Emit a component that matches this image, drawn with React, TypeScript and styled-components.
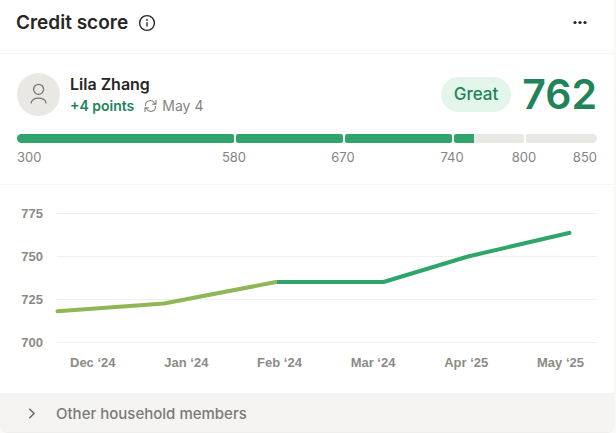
import React from 'react';
import styled, { createGlobalStyle } from 'styled-components';

const color = {
  ink: '#262625',
  muted: '#85847f',
  axis: '#8c8b87',
  line: '#f6f6f5',
  grid: '#efefed',
  track: '#e9e8e5',
  green: '#2fa56b',
  deepGreen: '#22835b',
  lime: '#8fb657',
  mint: '#e4f6ea',
  footer: '#f5f4f2',
};

const GlobalStyle = createGlobalStyle`
  *, *::before, *::after { box-sizing: border-box; }
  body {
    margin: 0;
    background: #fafaf9;
    color: ${color.ink};
    font-family: Inter, "Liberation Sans", sans-serif;
    font-size: 14px;
    line-height: 20px;
  }
  h1, h2, p { margin: 0; }
  button { border: 0; padding: 0; background: none; font: inherit; color: inherit; cursor: pointer; }
`;

const Card = styled.main`
  margin-right: 1px;
  border-right: 1px solid ${color.line};
  border-bottom: 1px solid #efeeec;
  border-radius: 0 0 8px 8px;
  background: #fff;
  overflow: hidden;
`;

const Header = styled.header`
  display: flex;
  align-items: center;
  justify-content: space-between;
  padding: 11px 26px 18px 16px;
  border-bottom: 1px solid ${color.line};
`;

const TitleGroup = styled.div`
  display: flex;
  align-items: center;
  gap: 10px;
`;

const Title = styled.h1`
  font-size: 19px;
  font-weight: 600;
  line-height: 24px;
`;

const IconButton = styled.button`
  display: flex;
  align-items: center;
`;

const Section = styled.section`
  padding: 16px 17px 17px;
  border-bottom: 1px solid ${color.line};
`;

const Profile = styled.div`
  display: flex;
  align-items: center;
  gap: 10px;
`;

const Avatar = styled.div`
  display: grid;
  place-items: center;
  width: 43px;
  height: 43px;
  border-radius: 50%;
  background: ${color.track};
`;

const Person = styled.div`
  flex: 1;
`;

const Name = styled.h2`
  font-size: 16px;
  font-weight: 600;
  line-height: 24px;
`;

const Meta = styled.p`
  display: flex;
  align-items: center;
  gap: 10px;
  line-height: 20px;
`;

const Change = styled.span`
  color: ${color.deepGreen};
  font-weight: 600;
`;

const Updated = styled.span`
  display: flex;
  align-items: center;
  gap: 5px;
  color: ${color.muted};
`;

const Result = styled.div`
  display: flex;
  align-items: center;
  gap: 11px;
`;

const Rating = styled.span`
  padding: 6px 13px;
  border-radius: 18px;
  background: ${color.mint};
  color: ${color.deepGreen};
  font-size: 17px;
  font-weight: 500;
  line-height: 23px;
`;

const Score = styled.strong`
  color: ${color.deepGreen};
  font-size: 41px;
  font-weight: 600;
  line-height: 48px;
`;

const Scale = styled.div`
  display: flex;
  gap: 2px;
  margin-top: 16px;
`;

const Segment = styled.div<{ $span: number; $fill: number }>`
  flex: ${(p) => p.$span} 1 0;
  height: 9px;
  border-radius: 2px;
  background: linear-gradient(
    to right,
    ${color.green} ${(p) => p.$fill}%,
    ${color.track} ${(p) => p.$fill}%
  );
  &:first-child { border-radius: 5px 2px 2px 5px; }
  &:last-child { border-radius: 2px 5px 5px 2px; }
`;

const ScaleLabels = styled.div`
  display: flex;
  gap: 2px;
  margin-top: 4px;
  color: ${color.muted};
  font-size: 13px;
`;

const ScaleCell = styled.div<{ $span: number }>`
  display: flex;
  flex: ${(p) => p.$span} 1 0;
  justify-content: flex-end;
`;

const ScaleStart = styled.span`
  flex: 1;
`;

const Tick = styled.span`
  display: flex;
  justify-content: center;
  width: 0;
`;

const ChartSection = styled.section`
  padding: 19px 17px 20px;
`;

const Plot = styled.div`
  display: grid;
  grid-template-columns: 26px 1fr;
  column-gap: 14px;
`;

const YAxis = styled.div`
  color: ${color.axis};
  font-family: "Liberation Sans", Arial, sans-serif;
  font-size: 13px;
  font-weight: 700;
  text-align: right;
`;

const YLabel = styled.div`
  height: 43px;
  line-height: 20px;
  &:last-child { height: 20px; }
`;

const Lines = styled.svg`
  display: block;
  width: 100%;
  height: 130px;
  margin-top: 9px;
  overflow: visible;
`;

const Months = styled.div`
  display: flex;
  justify-content: space-between;
  padding: 0 13px 0 53px;
  color: ${color.axis};
  font-family: "Liberation Sans", Arial, sans-serif;
  font-size: 13px;
  font-weight: 700;
`;

const Household = styled.button`
  display: flex;
  align-items: center;
  gap: 18px;
  width: 100%;
  padding: 10px 25px 8px;
  background: ${color.footer};
  color: #7b7a76;
  font-size: 15px;
  font-weight: 500;
  line-height: 21px;
`;

const segments = [
  { span: 217, fill: 100, end: '580' },
  { span: 107, fill: 100, end: '670' },
  { span: 107, fill: 100, end: '740' },
  { span: 70, fill: 28, end: '800' },
  { span: 71, fill: 0, end: '850' },
];
const levels = ['775', '750', '725', '700'];
const months = ['Dec ‘24', 'Jan ‘24', 'Feb ‘24', 'Mar ‘24', 'Apr ‘25', 'May ‘25'];

function InfoIcon() {
  return (
    <svg width="18" height="18" viewBox="0 0 18 18" fill="none" stroke={color.ink} strokeWidth="1.4">
      <circle cx="9" cy="9" r="7.4" />
      <path d="M9 8.2v4.2" />
      <circle cx="9" cy="5.9" r="0.9" fill={color.ink} stroke="none" />
    </svg>
  );
}

function MoreIcon() {
  return (
    <svg width="16" height="16" viewBox="0 0 16 16" fill={color.ink}>
      <circle cx="3" cy="7.5" r="1.6" />
      <circle cx="8" cy="7.5" r="1.6" />
      <circle cx="13" cy="7.5" r="1.6" />
    </svg>
  );
}

function PersonIcon() {
  return (
    <svg width="20" height="22" viewBox="0 0 20 22" fill="none" stroke="#777672" strokeWidth="1.3">
      <circle cx="9.6" cy="6.3" r="5" />
      <path d="M2 20.3c.6-3.2 3.6-5.1 7.6-5.1s7 1.9 7.6 5.1" />
    </svg>
  );
}

function SyncIcon() {
  return (
    <svg width="13" height="14" viewBox="0 0 13 14" fill="none" stroke={color.muted} strokeWidth="1.1">
      <path d="M1.5 7V6.3A4.7 4.7 0 0 1 10.4 4.2L11.7 5M12 1v4.2H8" />
      <path d="M11.5 7v.7A4.7 4.7 0 0 1 2.6 9.8L1.3 9M1 13V8.8h4" />
    </svg>
  );
}

function ChevronIcon() {
  return (
    <svg width="13" height="13" viewBox="0 0 13 13" fill="none" stroke="#6d6c68" strokeWidth="1.6">
      <path d="M4.3 1.8 9 6.5l-4.7 4.7" />
    </svg>
  );
}

export default function App() {
  return (
    <>
      <GlobalStyle />
      <Card>
        <Header>
          <TitleGroup>
            <Title>Credit score</Title>
            <IconButton aria-label="About credit score"><InfoIcon /></IconButton>
          </TitleGroup>
          <IconButton aria-label="More options"><MoreIcon /></IconButton>
        </Header>

        <Section>
          <Profile>
            <Avatar><PersonIcon /></Avatar>
            <Person>
              <Name>Lila Zhang</Name>
              <Meta>
                <Change>+4 points</Change>
                <Updated><SyncIcon />May 4</Updated>
              </Meta>
            </Person>
            <Result>
              <Rating>Great</Rating>
              <Score>762</Score>
            </Result>
          </Profile>
          <Scale>
            {segments.map((s) => <Segment key={s.end} $span={s.span} $fill={s.fill} />)}
          </Scale>
          <ScaleLabels>
            {segments.map((s, i) => (
              <ScaleCell key={s.end} $span={s.span}>
                {i === 0 && <ScaleStart>300</ScaleStart>}
                {i === segments.length - 1 ? <span>{s.end}</span> : <Tick>{s.end}</Tick>}
              </ScaleCell>
            ))}
          </ScaleLabels>
        </Section>

        <ChartSection>
          <Plot>
            <YAxis>{levels.map((l) => <YLabel key={l}>{l}</YLabel>)}</YAxis>
            <Lines viewBox="0 0 540 130" preserveAspectRatio="none" fill="none" role="img" aria-label="Credit score by month">
              <path d="M0 .5H540M0 43.5H540M0 86.5H540M0 129.5H540" stroke={color.grid} vectorEffect="non-scaling-stroke" />
              <g strokeWidth="4" strokeLinejoin="round">
                <path d="M0.5 98.3 107 90.5 219 69" stroke={color.lime} strokeLinecap="round" vectorEffect="non-scaling-stroke" />
                <path d="M513 19.7 411 43.5 326.5 69H220" stroke={color.green} vectorEffect="non-scaling-stroke" />
                <path d="M512.5 19.8h.01" stroke={color.green} strokeLinecap="round" vectorEffect="non-scaling-stroke" />
              </g>
            </Lines>
          </Plot>
          <Months>{months.map((m) => <span key={m}>{m}</span>)}</Months>
        </ChartSection>

        <Household aria-expanded="false">
          <ChevronIcon />
          Other household members
        </Household>
      </Card>
    </>
  );
}
